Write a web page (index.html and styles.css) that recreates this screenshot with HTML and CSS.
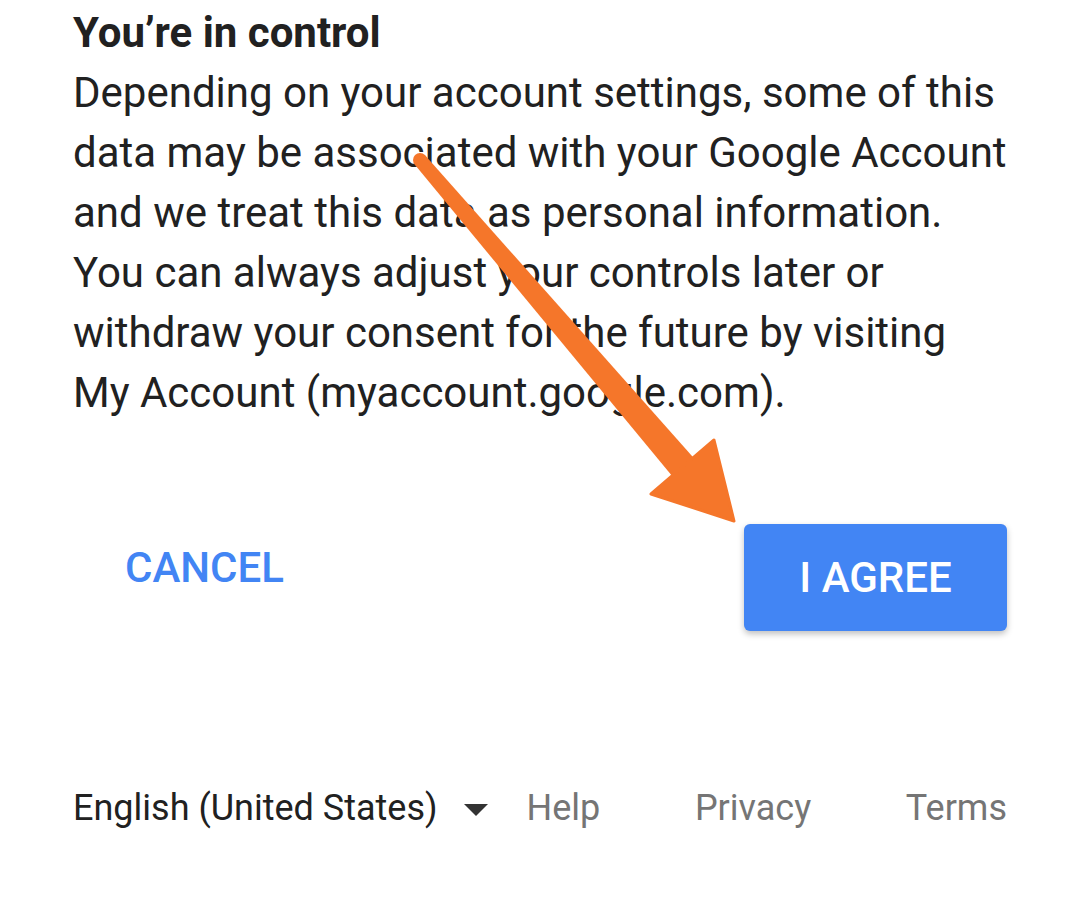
FILE: index.html
```html
<!DOCTYPE html>
<html>
<head>
<meta charset="utf-8">
<link rel="stylesheet" href="styles.css">
</head>
<body>
<div class="page">
  <section class="content">
    <h1 class="title">You’re in control</h1>
    <p class="body">Depending on your account settings, some of this<br>data may be associated with your Google Account<br>and we treat this data as personal information.<br>You can always adjust your controls later or<br>withdraw your consent for the future by visiting<br>My Account (myaccount.google.com).</p>
  </section>
  <div class="actions">
    <button class="btn-cancel">CANCEL</button>
    <button class="btn-agree">I AGREE</button>
  </div>
  <footer class="footer">
    <div class="lang">English (United States) <span class="caret"></span></div>
    <div class="links">
      <span class="link">Help</span>
      <span class="link">Privacy</span>
      <span class="link">Terms</span>
    </div>
  </footer>
  <svg class="arrow" width="1077" height="902" viewBox="0 0 1077 902">
    <circle cx="420" cy="160" r="7" fill="#f5762a"/>
    <polygon points="414.7,164.6 425.3,155.4 693.1,457.3 671.9,475.7" fill="#f5762a"/>
    <polygon points="651,494 714,440 734,521" fill="#f5762a" stroke="#f5762a" stroke-width="3" stroke-linejoin="round"/>
  </svg>
</div>
</body>
</html>
```
FILE: styles.css
```css
html, body {
  margin: 0;
  padding: 0;
  background: #ffffff;
}
.page {
  position: relative;
  width: 1077px;
  height: 902px;
  font-family: Roboto, "Noto Sans", Arial, sans-serif;
  color: #212121;
  overflow: hidden;
}
.content {
  padding: 3px 40px 0 73px;
}
.title {
  margin: 0;
  font-size: 42px;
  font-weight: 700;
  line-height: 60px;
}
.body {
  margin: 0;
  font-size: 42px;
  font-weight: 400;
  line-height: 60px;
  white-space: nowrap;
}
.actions {
  display: flex;
  justify-content: space-between;
  align-items: center;
  padding: 101px 70px 0 92px;
}
.btn-cancel {
  border: none;
  background: none;
  font-family: inherit;
  font-size: 42px;
  font-weight: 500;
  color: #4285f4;
  padding: 0 33px;
  height: 60px;
  margin-top: -20px;
}
.btn-agree {
  border: none;
  background: #4285f4;
  color: #ffffff;
  font-family: inherit;
  font-size: 42px;
  font-weight: 500;
  width: 263px;
  height: 107px;
  border-radius: 6px;
  box-shadow: 0 3px 6px rgba(0,0,0,0.25);
}
.footer {
  display: flex;
  align-items: center;
  padding: 156px 70px 0 73px;
  font-size: 36px;
}
.lang {
  display: flex;
  align-items: center;
  color: #212121;
}
.caret {
  display: inline-block;
  width: 0;
  height: 0;
  border-left: 12px solid transparent;
  border-right: 12px solid transparent;
  border-top: 12px solid #333;
  margin-left: 26px;
  margin-top: 4px;
}
.links {
  display: flex;
  flex: 1;
  justify-content: space-between;
  margin-left: 39px;
  color: #757575;
}
.arrow {
  position: absolute;
  left: 0;
  top: 0;
  pointer-events: none;
}
```
